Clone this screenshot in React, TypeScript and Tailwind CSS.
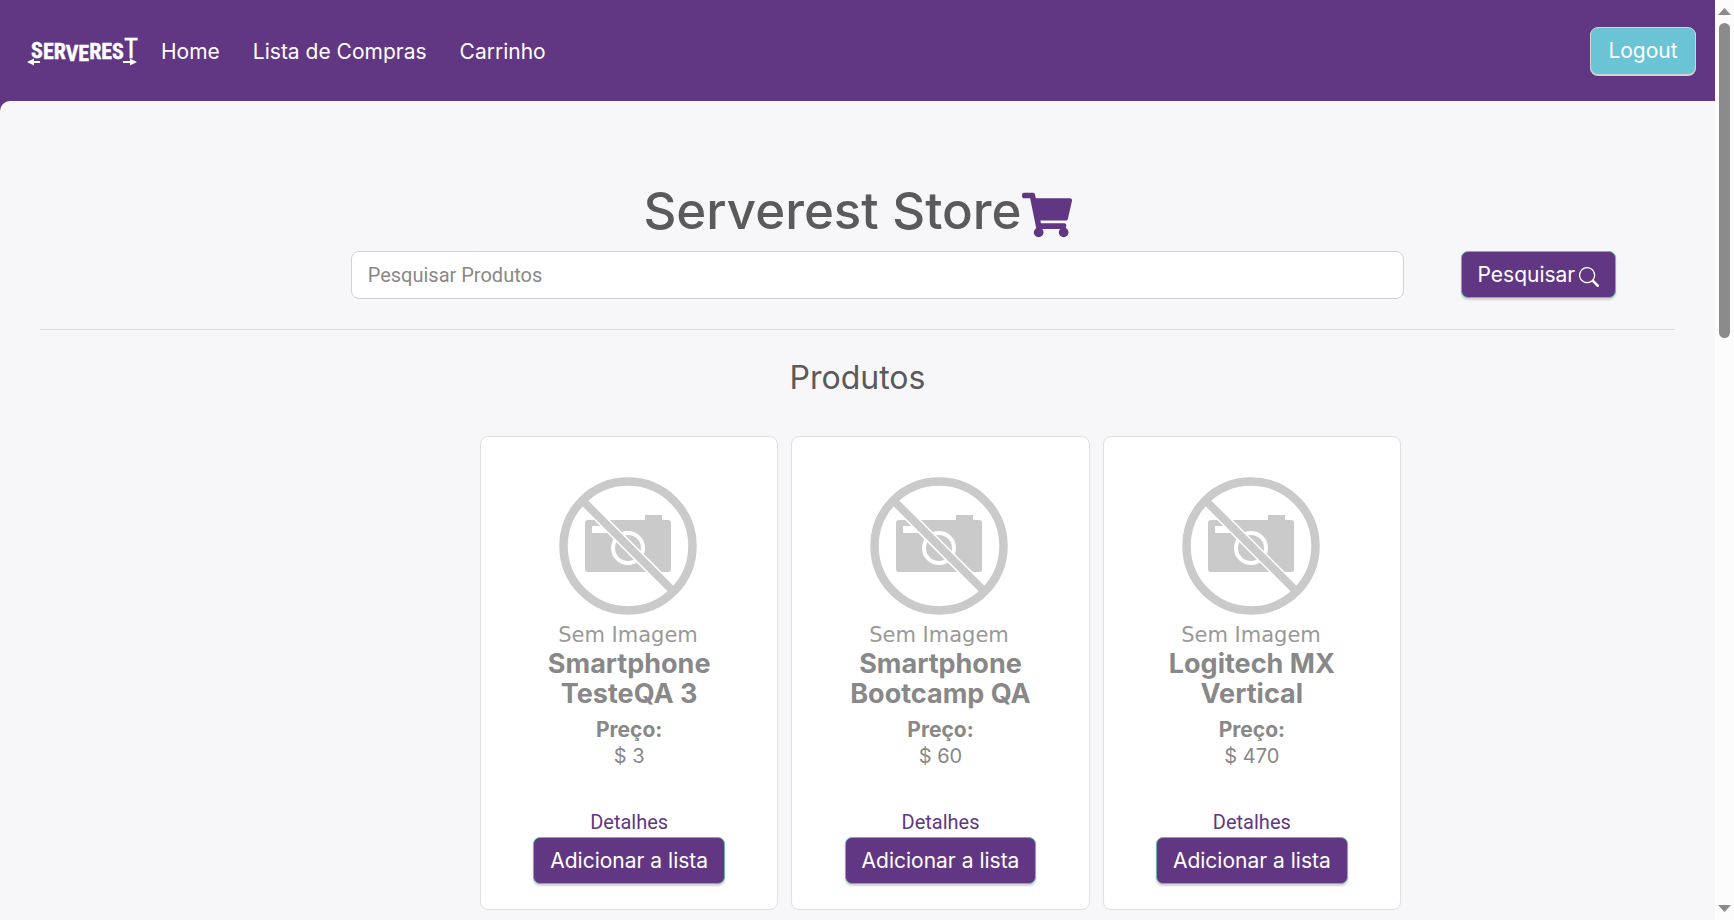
import React from "react";
import { BsSearch } from "react-icons/bs";
import { FaShoppingCart } from "react-icons/fa";

const products = [
  { name: "Smartphone TesteQA 3", price: 3 },
  { name: "Smartphone Bootcamp QA", price: 60 },
  { name: "Logitech MX Vertical", price: 470 },
];

const primaryButton =
  "rounded-[7px] border border-[#6cb5a8] bg-[#613783] px-4 text-white h-[47px] leading-[30px] shadow-[0_2px_2px_#d3d3d3] whitespace-nowrap";

function Logo() {
  return (
    <svg viewBox="0 0 112 34" className="h-[34px] w-28" fill="#fff" role="img" aria-label="Serverest">
      <text
        x="4"
        y="24"
        fontFamily="'Roboto Condensed', 'Liberation Sans Narrow', sans-serif"
        fontWeight="700"
        fontSize="22"
        stroke="#fff"
        strokeWidth="0.4"
      >
        S<tspan dy="1">ER</tspan><tspan dy="2">VE</tspan><tspan dy="-2">RES</tspan>
        <tspan dy="-1" fontSize="27" fontWeight="400">T</tspan>
      </text>
      <path d="M0 28L7 24.500V27H13V29H7V31.500Z" />
      <path d="M110 28L103 24.500V27H96V29H103V31.500Z" />
    </svg>
  );
}

function NoImage() {
  return (
    <svg viewBox="0 0 140 172" className="h-[172px] w-[140px]" role="img" aria-label="Sem Imagem">
      <rect x="26" y="43" width="86" height="52" rx="3" fill="#cacaca" />
      <rect x="86" y="38" width="17" height="8" fill="#cacaca" />
      <rect x="33" y="49" width="22" height="7" fill="#fff" />
      <circle cx="69" cy="71" r="15" fill="#cacaca" stroke="#fff" strokeWidth="4" />
      <path d="M24 24L114 114" stroke="#fff" strokeWidth="11" />
      <path d="M23 23L115 115" stroke="#cacaca" strokeWidth="8" />
      <circle cx="69" cy="69" r="64.500" fill="none" stroke="#cacaca" strokeWidth="8.500" />
      <text x="69" y="165" textAnchor="middle" fontFamily="'DejaVu Sans', sans-serif" fontSize="21" fill="#999">
        Sem Imagem
      </text>
    </svg>
  );
}

export default function App() {
  return (
    <div className="flex h-screen bg-[#fcfcfc] font-['Inter',sans-serif] text-[21px]">
      <div className="min-w-0 flex-1 overflow-hidden bg-[#613783]">
        <nav className="flex h-[101px] items-center pr-[19px] pl-[27px] text-white">
          <a href="#home" className="mr-[22px]"><Logo /></a>
          <div className="flex flex-1 gap-[33px] pt-0.5">
            <a href="#home">Home</a>
            <a href="#lista">Lista de Compras</a>
            <a href="#carrinho">Carrinho</a>
          </div>
          <button type="button" className="h-12 min-w-[106px] rounded-[8px] border border-[#d3d3d3] bg-[#6bc3d6] px-4 shadow-[0_1px_0_#d3d3d3]">
            Logout
          </button>
        </nav>

        <main className="min-h-full rounded-tl-[10px] bg-[#f7f7f9] px-10 pt-20">
          <h1 className="flex items-center justify-center text-[51px] leading-[60px] font-medium text-[#5a5a5a]">
            Serverest Store
            <FaShoppingCart className="mt-2 size-[50px] text-[#613783]" />
          </h1>

          <form className="mt-[10px] flex pl-[19%]" onSubmit={(e) => e.preventDefault()}>
            <input
              type="text"
              aria-label="Pesquisar Produtos"
              placeholder="Pesquisar Produtos"
              className="h-12 w-[79.5%] rounded-[8px] border border-[#cfd2da] bg-white px-4 font-['Roboto',sans-serif] text-[20px] placeholder:text-[#888]"
            />
            <button type="submit" className={primaryButton + " ml-[57px] flex items-center gap-1"}>
              Pesquisar <BsSearch className="mt-1 size-5" />
            </button>
          </form>

          <hr className="mt-[30px] border-[#dcdcde]" />
          <h2 className="mt-[30px] text-center text-[32px] leading-9 font-normal text-[#5a5a5a]">Produtos</h2>

          <section className="mt-10 grid grid-cols-3 gap-[13px] pr-[274px] pl-[440px] max-xl:px-0">
            {products.map((p) => (
              <article
                key={p.name}
                className="flex flex-col items-center rounded-[8px] border border-[#dfdfdf] bg-white px-10 pt-10 pb-[25px] text-center text-[#888]"
              >
                <NoImage />
                <h3 className="text-[27px] leading-[30px] font-bold">{p.name}</h3>
                <p className="mt-2 text-[21px] leading-[26px] font-bold">Preço:</p>
                <p className="text-[20px] leading-[26px]">$ {p.price}</p>
                <a href="#detalhes" className="mt-[38px] font-['Roboto',sans-serif] text-[20px] leading-[30px] text-[#613783]">
                  Detalhes
                </a>
                <button type="button" className={primaryButton}>Adicionar a lista</button>
              </article>
            ))}
          </section>
        </main>
      </div>

      <div className="flex w-[19px] shrink-0 flex-col items-center bg-[#fcfcfc] py-2" aria-hidden="true">
        <svg viewBox="0 0 13 7" className="h-[7px] w-[13px]" fill="#8b8b8b"><path d="M0 7L6.500 0L13 7Z" /></svg>
        <div className="mt-2 min-h-0 flex-1">
          <div className="h-[35.7%] w-[11px] rounded-full bg-[#8b8b8b]" />
        </div>
        <svg viewBox="0 0 13 7" className="h-[7px] w-[13px]" fill="#8b8b8b"><path d="M0 0L6.500 7L13 0Z" /></svg>
      </div>
    </div>
  );
}
